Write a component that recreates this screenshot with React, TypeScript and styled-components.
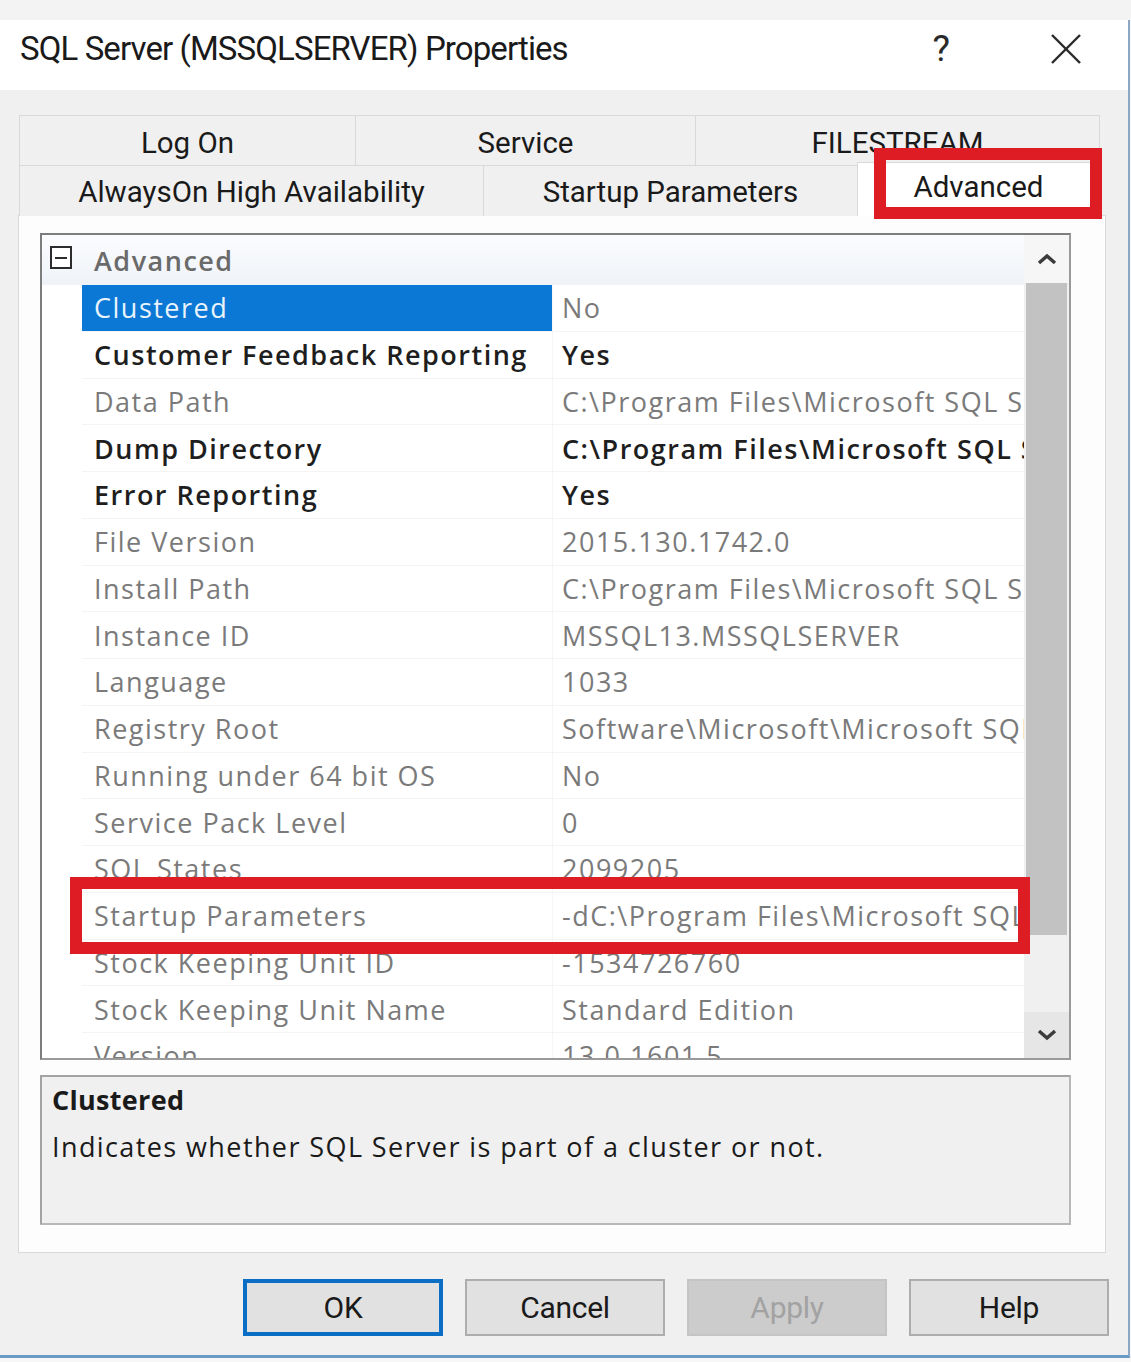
import React from "react";
import styled, { createGlobalStyle, css } from "styled-components";

const GlobalStyle = createGlobalStyle`
  html, body { margin: 0; padding: 0; background: #f7f7f7; }
  * { box-sizing: border-box; }
`;

const chrome = `"Roboto", "Liberation Sans", sans-serif`;
const gridFont = `"Open Sans", "Noto Sans", sans-serif`;

const Page = styled.div`
  width: 1131px;
  height: 1362px;
  display: flex;
  flex-direction: column;
  background: #f7f7f7;
  overflow: hidden;
`;

const TopGap = styled.div`
  height: 20px;
  background: #f3f3f3;
`;

const Window = styled.div`
  width: 1130px;
  height: 1338px;
  display: flex;
  flex-direction: column;
  background: #f0f0f0;
  border-right: 2px solid #8ba7c4;
  border-bottom: 3px solid #6a9bc6;
`;

const TitleBar = styled.div`
  height: 70px;
  background: #ffffff;
  display: flex;
  align-items: flex-start;
  padding: 9px 0 0 20px;
  font-family: ${chrome};
  font-size: 33px;
  line-height: 40px;
  color: #1a1a1a;
`;

const TitleText = styled.div`
  flex: 1;
  letter-spacing: -0.9px;
`;

const TitleButtons = styled.div`
  display: flex;
  align-items: center;
  gap: 100px;
  padding-right: 46px;
  height: 40px;
`;

const HelpGlyph = styled.span`
  font-family: ${chrome};
  font-size: 37px;
  font-weight: 400;
  color: #2a2a2a;
`;

const Body = styled.div`
  flex: 1;
  display: flex;
  flex-direction: column;
  padding: 25px 22px 0 18px;
`;

const TabStrip = styled.div`
  position: relative;
  margin: 0 6px 0 2px;
  display: flex;
  flex-direction: column;
`;

const TabRow = styled.div<{ $cols: string }>`
  display: grid;
  grid-template-columns: ${(p) => p.$cols};
  height: 50px;
`;

const Tab = styled.div<{ $selected?: boolean; $shift?: number }>`
  display: flex;
  align-items: center;
  justify-content: center;
  font-family: ${chrome};
  font-size: 29.5px;
  color: #1a1a1a;
  background: #f0f0f0;
  border: 1px solid #d9d9d9;
  border-bottom: none;
  margin-left: -1px;
  padding-top: ${(p) => p.$shift ?? 0}px;
  ${(p) =>
    p.$selected &&
    css`
      background: #ffffff;
      margin-top: -3px;
      height: 54px;
      position: relative;
      z-index: 1;
      padding-top: 0;
      padding-bottom: 6px;
    `}
`;

const Highlight = styled.div<{ $w: number; $h: number; $x: number; $y: number }>`
  position: absolute;
  left: ${(p) => p.$x}px;
  top: ${(p) => p.$y}px;
  width: ${(p) => p.$w}px;
  height: ${(p) => p.$h}px;
  border: 12px solid #de1c24;
  z-index: 5;
  pointer-events: none;
`;

const Panel = styled.div`
  height: 1038px;
  background: #fdfdfd;
  border: 1px solid #d9d9d9;
  padding: 17px 34px 27px 21px;
  display: flex;
  flex-direction: column;
  gap: 15px;
`;

const GridFrame = styled.div`
  position: relative;
  height: 827px;
  border: 2px solid #7d7d7d;
  border-right-color: #9a9a9a;
  border-bottom-color: #9a9a9a;
  background: #ffffff;
  display: flex;
  overflow: visible;
`;

const RowsArea = styled.div`
  flex: 1;
  display: flex;
  flex-direction: column;
  overflow: hidden;
  font-family: ${gridFont};
  font-size: 27px;
  letter-spacing: 1.5px;
`;

const CategoryRow = styled.div`
  height: 50px;
  flex: none;
  display: flex;
  align-items: center;
  background: linear-gradient(to bottom, #fbfcfe, #eff3f8);
  color: #6a6a6a;
  font-weight: 600;
`;

const ExpandBox = styled.div`
  width: 22px;
  height: 23px;
  margin: 11px 22px 0 8px;
  border: 2px solid #2c2c2c;
  background: #ffffff;
  display: flex;
  align-items: center;
  justify-content: center;
  align-self: flex-start;
  &::after {
    content: "";
    width: 12px;
    height: 2px;
    background: #2c2c2c;
  }
`;

const PropRow = styled.div`
  flex: none;
  height: 46.75px;
  display: grid;
  grid-template-columns: 40px 471px 1fr;
`;

const Gutter = styled.div`
  background: #ffffff;
`;

const NameCell = styled.div<{ $selected?: boolean; $bold?: boolean }>`
  display: flex;
  align-items: center;
  padding-left: 12px;
  white-space: nowrap;
  overflow: hidden;
  border-right: 1px solid #f6f6f6;
  border-bottom: 1px solid #f4f4f4;
  color: ${(p) => (p.$selected ? "#e9f3fc" : p.$bold ? "#1e1e1e" : "#7a7a7a")};
  background: ${(p) => (p.$selected ? "#0a78d4" : "#ffffff")};
  font-weight: ${(p) => (p.$bold ? 600 : 400)};
`;

const ValueCell = styled.div<{ $bold?: boolean }>`
  display: flex;
  align-items: center;
  padding-left: 9px;
  white-space: nowrap;
  overflow: hidden;
  border-bottom: 1px solid #f4f4f4;
  color: ${(p) => (p.$bold ? "#1e1e1e" : "#7a7a7a")};
  font-weight: ${(p) => (p.$bold ? 600 : 400)};
`;

const Scrollbar = styled.div`
  width: 45px;
  flex: none;
  display: flex;
  flex-direction: column;
  background: #f0f0f0;
`;

const ArrowButton = styled.div<{ $h: number; $bg: string }>`
  height: ${(p) => p.$h}px;
  flex: none;
  display: flex;
  align-items: center;
  justify-content: center;
  background: ${(p) => p.$bg};
`;

const Track = styled.div`
  flex: 1;
  padding: 0 2px;
  background: #f0f0f0;
`;

const Thumb = styled.div`
  height: 652px;
  background: #c2c2c2;
`;

const DescBox = styled.div`
  height: 150px;
  border: 2px solid #a3a3a3;
  border-right-color: #b8b8b8;
  border-bottom-color: #b8b8b8;
  background: #f0f0f0;
  padding: 3px 10px 0;
  font-family: ${gridFont};
  font-size: 27px;
  line-height: 40px;
  color: #1a1a1a;
`;

const DescTitle = styled.div`
  font-weight: 700;
  letter-spacing: 0.3px;
`;

const DescText = styled.div`
  margin-top: 7px;
  letter-spacing: 1.4px;
`;

const ButtonRow = styled.div`
  display: flex;
  justify-content: flex-end;
  gap: 22px;
  margin: 26px -3px 0 0;
`;

const Button = styled.div<{ $variant?: "default" | "disabled" }>`
  width: 200px;
  height: 57px;
  display: flex;
  align-items: center;
  justify-content: center;
  font-family: ${chrome};
  font-size: 30px;
  letter-spacing: -0.3px;
  color: #1a1a1a;
  background: #e1e1e1;
  border: 2px solid #adadad;
  ${(p) =>
    p.$variant === "default" &&
    css`
      border: 4px solid #0a6fc4;
    `}
  ${(p) =>
    p.$variant === "disabled" &&
    css`
      background: #cccccc;
      border-color: #c4c4c4;
      color: #a2a2a2;
    `}
`;

type Prop = { name: string; value: string; bold?: boolean; selected?: boolean };

const props: Prop[] = [
  { name: "Clustered", value: "No", selected: true },
  { name: "Customer Feedback Reporting", value: "Yes", bold: true },
  { name: "Data Path", value: "C:\\Program Files\\Microsoft SQL Server\\MSSQL13.MSSQLSERVER\\MSSQL\\DATA" },
  { name: "Dump Directory", value: "C:\\Program Files\\Microsoft SQL Server\\MSSQL13.MSSQLSERVER\\MSSQL\\LOG", bold: true },
  { name: "Error Reporting", value: "Yes", bold: true },
  { name: "File Version", value: "2015.130.1742.0" },
  { name: "Install Path", value: "C:\\Program Files\\Microsoft SQL Server\\MSSQL13.MSSQLSERVER\\MSSQL" },
  { name: "Instance ID", value: "MSSQL13.MSSQLSERVER" },
  { name: "Language", value: "1033" },
  { name: "Registry Root", value: "Software\\Microsoft\\Microsoft SQL Server\\MSSQL13.MSSQLSERVER" },
  { name: "Running under 64 bit OS", value: "No" },
  { name: "Service Pack Level", value: "0" },
  { name: "SQL States", value: "2099205" },
  { name: "Startup Parameters", value: "-dC:\\Program Files\\Microsoft SQL Server\\MSSQL13.MSSQLSERVER\\MSSQL\\DATA\\master.mdf" },
  { name: "Stock Keeping Unit ID", value: "-1534726760" },
  { name: "Stock Keeping Unit Name", value: "Standard Edition" },
  { name: "Version", value: "13.0.1601.5" },
];

const Chevron = ({ up }: { up?: boolean }) => (
  <svg width="20" height="12" viewBox="0 0 20 12">
    <polyline
      points={up ? "2,10 10,3 18,10" : "2,2 10,9 18,2"}
      fill="none"
      stroke="#3c3c3c"
      strokeWidth="3.5"
    />
  </svg>
);

const CloseIcon = () => (
  <svg width="32" height="32" viewBox="0 0 32 32">
    <line x1="2" y1="2" x2="30" y2="30" stroke="#2a2a2a" strokeWidth="2.4" />
    <line x1="30" y1="2" x2="2" y2="30" stroke="#2a2a2a" strokeWidth="2.4" />
  </svg>
);

export default function App() {
  return (
    <Page>
      <GlobalStyle />
      <TopGap />
      <Window>
        <TitleBar>
          <TitleText>SQL Server (MSSQLSERVER) Properties</TitleText>
          <TitleButtons>
            <HelpGlyph>?</HelpGlyph>
            <CloseIcon />
          </TitleButtons>
        </TitleBar>
        <Body>
          <TabStrip>
            <TabRow $cols="336px 340px 1fr">
              <Tab $shift={4}>Log On</Tab>
              <Tab $shift={4}>Service</Tab>
              <Tab $shift={4}>FILESTREAM</Tab>
            </TabRow>
            <TabRow $cols="464px 374px 1fr">
              <Tab $shift={1}>AlwaysOn High Availability</Tab>
              <Tab $shift={1}>Startup Parameters</Tab>
              <Tab $selected>Advanced</Tab>
            </TabRow>
            <Highlight $x={854} $y={33} $w={228} $h={71} />
          </TabStrip>
          <Panel>
            <GridFrame>
              <RowsArea>
                <CategoryRow>
                  <ExpandBox />
                  Advanced
                </CategoryRow>
                {props.map((p) => (
                  <PropRow key={p.name}>
                    <Gutter />
                    <NameCell $selected={p.selected} $bold={p.bold}>
                      {p.name}
                    </NameCell>
                    <ValueCell $bold={p.bold}>{p.value}</ValueCell>
                  </PropRow>
                ))}
              </RowsArea>
              <Scrollbar>
                <ArrowButton $h={48} $bg="#f6f6f6">
                  <Chevron up />
                </ArrowButton>
                <Track>
                  <Thumb />
                </Track>
                <ArrowButton $h={46} $bg="#e6e6e6">
                  <Chevron />
                </ArrowButton>
              </Scrollbar>
              <Highlight $x={28} $y={642} $w={960} $h={77} />
            </GridFrame>
            <DescBox>
              <DescTitle>Clustered</DescTitle>
              <DescText>Indicates whether SQL Server is part of a cluster or not.</DescText>
            </DescBox>
          </Panel>
          <ButtonRow>
            <Button $variant="default">OK</Button>
            <Button>Cancel</Button>
            <Button $variant="disabled">Apply</Button>
            <Button>Help</Button>
          </ButtonRow>
        </Body>
      </Window>
    </Page>
  );
}
